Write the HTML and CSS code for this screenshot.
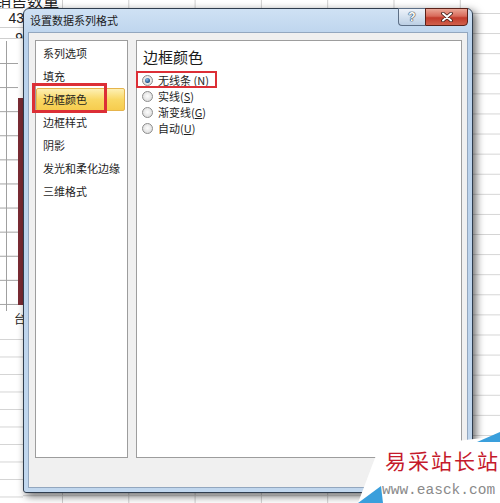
FILE: index.html
```html
<!DOCTYPE html>
<html>
<head>
  <meta charset="utf-8">
  <title>设置数据系列格式</title>
  <link rel="stylesheet" href="styles.css">
</head>
<body>
<div class="sheet">
  <div class="head-row"><span class="head-text">销售数量</span></div>
  <div class="sheet-body">
    <div class="strip">
      <div class="cell cell-a">43</div>
      <div class="cell cell-b">9</div>
      <div class="chart">
        <div class="gridlines"></div>
        <div class="axis"></div>
        <div class="bar"></div>
        <div class="axis-label">台</div>
      </div>
      <div class="rows"></div>
    </div>
    <div class="grid"></div>
  </div>
</div>

<div class="dialog">
  <div class="titlebar">
    <span class="title">设置数据系列格式</span>
    <div class="caption-buttons">
      <div class="btn-help">?</div>
      <div class="btn-close">
        <svg width="12" height="10" viewBox="0 0 12 10">
          <path d="M2 1.5 L10 8.5 M10 1.5 L2 8.5" stroke="#3a1a14" stroke-width="3.6" stroke-linecap="round"/>
          <path d="M2 1.5 L10 8.5 M10 1.5 L2 8.5" stroke="#fff" stroke-width="2" stroke-linecap="round"/>
        </svg>
      </div>
    </div>
  </div>
  <div class="client">
    <div class="panes">
      <ul class="nav">
        <li>系列选项</li>
        <li>填充</li>
        <li class="active">边框颜色<span class="mark mark-nav"></span></li>
        <li>边框样式</li>
        <li>阴影</li>
        <li>发光和柔化边缘</li>
        <li>三维格式</li>
      </ul>
      <div class="content">
        <div class="heading">边框颜色</div>
        <div class="option checked"><span class="radio"></span>无线条 (<u>N</u>)<span class="mark mark-opt"></span></div>
        <div class="option"><span class="radio"></span>实线(<u>S</u>)</div>
        <div class="option"><span class="radio"></span>渐变线(<u>G</u>)</div>
        <div class="option"><span class="radio"></span>自动(<u>U</u>)</div>
      </div>
    </div>
  </div>
</div>

<div class="watermark">
  <svg class="wm-shape" width="144" height="73" viewBox="0 0 144 73">
    <polygon points="22,20 144,6 144,73 2,73" fill="#fff"/>
    <polygon points="2,73 25,56 27,73" fill="#3a9fdc"/>
    <polygon points="121,12 144,2 144,12" fill="#3a9fdc"/>
  </svg>
  <div class="wm-cn">易采站长站</div>
  <div class="wm-url">www.easck.com</div>
</div>
</body>
</html>
```

FILE: styles.css
```css
* {
    box-sizing: border-box;
}

body {
    margin: 0;
    width: 500px;
    height: 503px;
    overflow: hidden;
    position: relative;
    background: #fff;
    font-family: "Noto Sans CJK SC", "Liberation Sans", sans-serif;
}

/* spreadsheet behind the dialog */
.sheet {
    height: 503px;
    display: flex;
    flex-direction: column;
}

.head-row {
    height: 8px;
    overflow: hidden;
    background: linear-gradient(to right, #cfcfcf 1px, transparent 1px) 62px 0 / 66.3px 100% repeat-x;
}

.head-text {
    display: block;
    font-size: 16px;
    line-height: 16px;
    margin-top: -8px;
    margin-left: -5px;
    color: #222;
}

.sheet-body {
    flex: 1;
    display: flex;
}

.strip {
    width: 23px;
    display: flex;
    flex-direction: column;
    border-top: 1px solid #cfcfcf;
}

.cell {
    border-bottom: 1px solid #cfcfcf;
    font-family: "Liberation Sans", sans-serif;
    font-size: 14px;
    color: #222;
    text-align: right;
    overflow: hidden;
}

.cell-a {
    height: 19px;
    line-height: 18px;
    margin-right: -1px;
}

.cell-b {
    height: 11px;
    line-height: 20px;
}

.chart {
    position: relative;
    height: 292px;
}

.gridlines {
    position: absolute;
    left: 0;
    top: 24px;
    width: 18px;
    height: 243px;
    background: linear-gradient(#a0a0a0 1px, transparent 1px) 0 0 / 100% 24.1px;
}

.axis {
    position: absolute;
    left: 6px;
    top: 2px;
    width: 1px;
    height: 270px;
    background: #a0a0a0;
}

.bar {
    position: absolute;
    left: 18px;
    top: 59px;
    width: 5px;
    height: 207px;
    background: #7b2b33;
}

.axis-label {
    position: absolute;
    left: 14px;
    top: 273px;
    font-size: 12px;
    line-height: 14px;
    color: #222;
}

.rows {
    flex: 1;
    background: linear-gradient(#d4d4d4 1px, transparent 1px) 0 8px / 100% 17.5px;
}

.grid {
    flex: 1;
    background:
        linear-gradient(#d4d4d4 1px, transparent 1px) 0 5px / 100% 20.1px,
        linear-gradient(to right, #cfcfcf 1px, transparent 1px) 39px 0 / 66.3px 100%;
}

/* dialog window */
.dialog {
    position: absolute;
    left: 23px;
    top: 8px;
    width: 450px;
    height: 485px;
    border: 1px solid #2f3d4e;
    border-radius: 6px 6px 3px 3px;
    background: linear-gradient(to bottom, #cfe1f4, #bad2ec 30px, #c1d7ee);
    padding: 0 4px 4px;
    display: flex;
    flex-direction: column;
    box-shadow: 3px 3px 9px rgba(0, 0, 0, 0.6);
}

.titlebar {
    height: 23px;
    display: flex;
    align-items: flex-start;
}

.title {
    font-size: 11px;
    line-height: 22px;
    padding-left: 2px;
    color: #1b1b1b;
}

.caption-buttons {
    margin-left: auto;
    display: flex;
    margin-top: -1px;
}

.btn-help,
.btn-close {
    height: 18px;
    display: flex;
    align-items: center;
    justify-content: center;
}

.btn-help {
    width: 27px;
    border: 1px solid #5d6f86;
    border-right: none;
    border-radius: 0 0 0 4px;
    background: linear-gradient(#eef3fa, #d4e1ef 50%, #bccfe4);
    font-family: "Liberation Sans", sans-serif;
    font-weight: bold;
    font-size: 12px;
    color: #fff;
    text-shadow: 0 0 1px #24364d, 0 0 1px #24364d, 0 0 1px #24364d;
}

.btn-close {
    width: 43px;
    border: 1px solid #5a2119;
    border-radius: 0 0 4px 0;
    background: linear-gradient(#eaa696, #d86a5a 45%, #c23b2b 55%, #d0604c);
}

.client {
    flex: 1;
    background: #f0f0f0;
    border: 1px solid #93a7bf;
    padding: 7px 5px 0 6px;
}

.panes {
    display: flex;
    gap: 8px;
    height: 418px;
}

.nav {
    width: 93px;
    margin: 0;
    padding: 1px 0 0;
    list-style: none;
    background: #fff;
    border: 1px solid #9d9d9d;
}

.nav li {
    position: relative;
    height: 23px;
    line-height: 23px;
    padding-left: 7px;
    font-size: 11px;
    color: #1e1e1e;
}

.nav li.active {
    margin-right: 2px;
    padding-left: 6px;
    line-height: 21px;
    border: 1px solid #e6b44c;
    border-radius: 2px;
    background: linear-gradient(#fdf0b4, #f9d865 50%, #f6cc4e);
}

.content {
    flex: 1;
    background: #fff;
    border: 1px solid #9d9d9d;
    padding: 6px 0 0 6px;
}

.heading {
    font-size: 15px;
    line-height: 20px;
    color: #1a1a1a;
    margin-bottom: 5px;
}

.option {
    position: relative;
    display: flex;
    align-items: center;
    height: 16px;
    margin-left: -1px;
    font-size: 11px;
    color: #1e1e1e;
}

.option u {
    text-decoration-thickness: 1px;
}

.radio {
    position: relative;
    flex: none;
    width: 11px;
    height: 11px;
    margin-right: 5px;
    border-radius: 50%;
    border: 1px solid #8d8d8d;
    background: radial-gradient(circle at 50% 45%, #fdfdfd, #dcdcdc 80%);
}

.checked .radio::after {
    content: '';
    position: absolute;
    left: 2px;
    top: 2px;
    width: 5px;
    height: 5px;
    border-radius: 50%;
    background: radial-gradient(circle at 40% 35%, #8cbde8, #1c4f86 70%);
}

/* red annotation boxes */
.mark {
    position: absolute;
    border: 3px solid #dc2f36;
}

.mark-nav {
    left: -5px;
    top: -6px;
    width: 75px;
    height: 30px;
}

.mark-opt {
    left: -6px;
    top: -1px;
    width: 81px;
    height: 17px;
    border-width: 2px;
}

/* watermark */
.watermark {
    position: absolute;
    z-index: 1;
    left: 356px;
    top: 430px;
    width: 144px;
    height: 73px;
    padding: 17px 0 0 29px;
}

.wm-shape {
    position: absolute;
    left: 0;
    top: 0;
    z-index: -1;
}

.wm-cn {
    font-size: 21px;
    line-height: 27px;
    letter-spacing: 2px;
    color: #c51a2c;
    white-space: nowrap;
}

.wm-url {
    margin-top: 9px;
    margin-left: -3px;
    font-family: "Liberation Mono", monospace;
    font-size: 14.5px;
    line-height: 14px;
    color: #8a8a8a;
    white-space: nowrap;
}
```
